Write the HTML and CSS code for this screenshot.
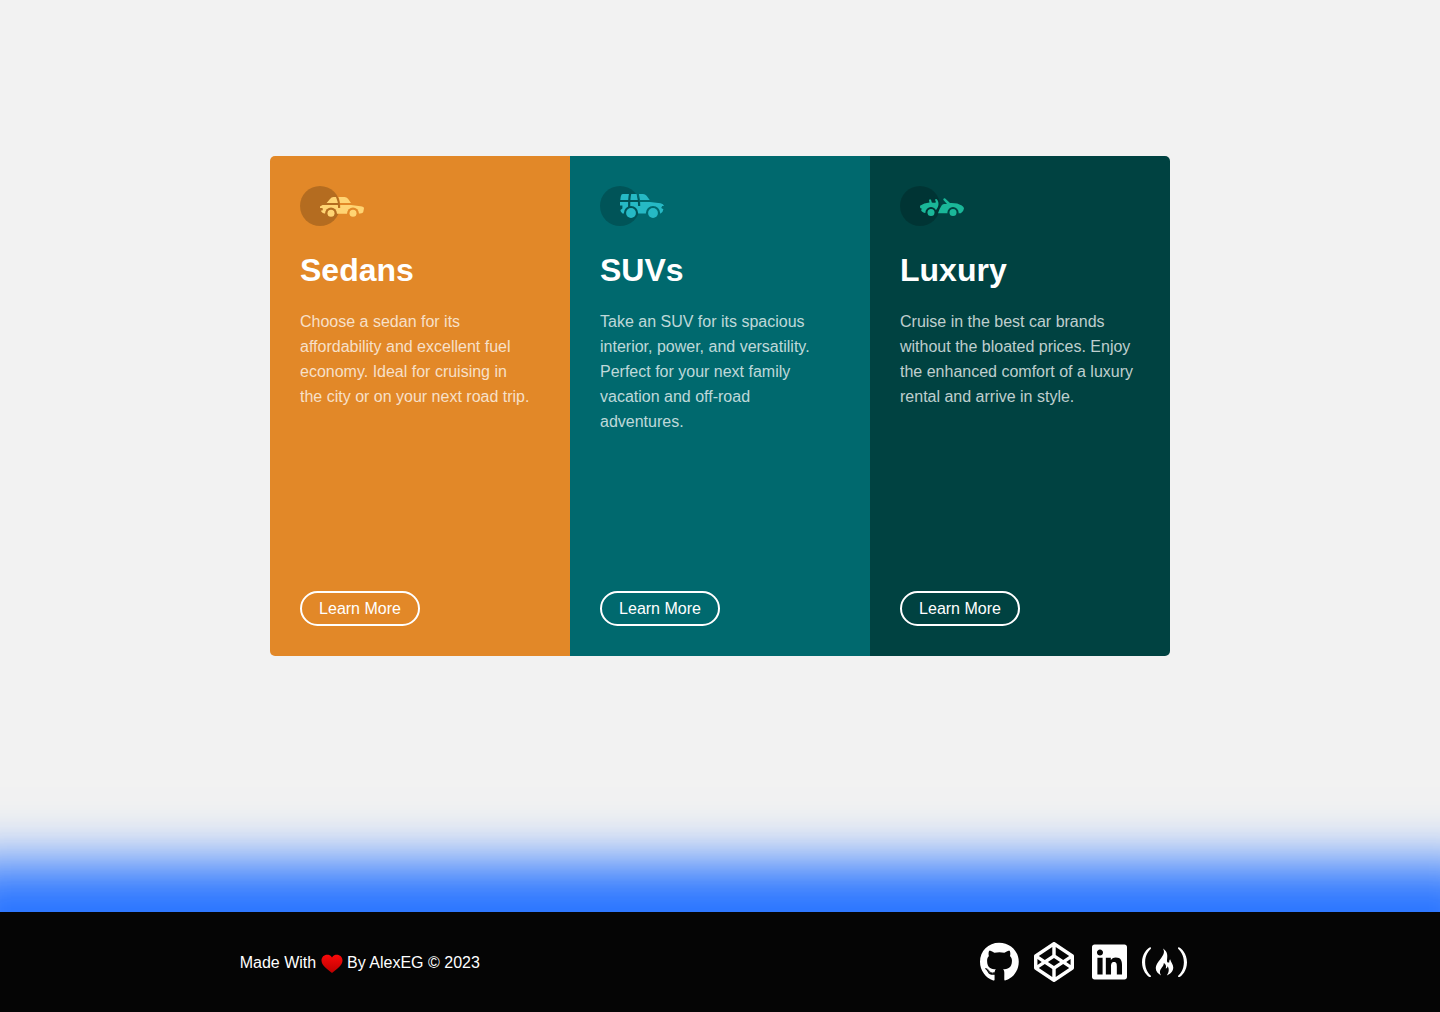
FILE: index.html
```html
<!DOCTYPE html>
<html lang="en">
<head>
<meta charset="utf-8">
<meta name="viewport" content="width=device-width, initial-scale=1">
<title>3-column preview card</title>
<link rel="stylesheet" href="styles.css">
</head>
<body>
<main class="main">
  <div class="cards">
    <section class="card card-sedans">
      <svg class="card-icon" viewBox="0 0 64 40" aria-hidden="true">
        <mask id="sedan-cut">
          <rect width="64" height="40" fill="#fff"/>
          <circle cx="31" cy="27.3" r="5.9" fill="#000"/>
          <circle cx="53" cy="27.3" r="5.9" fill="#000"/>
          <path d="M36.8 10C38.6 13.5 39.3 17 39.2 22" fill="none" stroke="#000" stroke-width="2.2"/>
        </mask>
        <circle cx="20" cy="20" r="20" fill="#000" opacity=".2"/>
        <g fill="#ffd473">
          <g mask="url(#sedan-cut)">
            <path d="M26.6 17L30 12.9Q31.3 11 33.5 11H44.5Q46.6 11 48 12.8L51 17Z"/>
            <path d="M22.5 19H51L60.5 20.2Q64 20.8 64 22.2L63.2 26.2Q62.6 27.3 58 27.7H25.5Q21 26.8 21 24.5H22.4Q23.4 23.2 22.4 22H20V20.6Z"/>
          </g>
          <circle cx="31" cy="27.3" r="3.5"/>
          <circle cx="53" cy="27.3" r="3.5"/>
        </g>
      </svg>
      <h2 class="card-title">Sedans</h2>
      <p class="card-text">Choose a sedan for its affordability and excellent fuel economy. Ideal for cruising in the&nbsp;city or on your next road trip.</p>
      <button class="card-button" type="button">Learn More</button>
    </section>
    <section class="card card-suvs">
      <svg class="card-icon" viewBox="0 0 64 40" aria-hidden="true">
        <mask id="suv-cut">
          <rect width="64" height="40" fill="#fff"/>
          <circle cx="31" cy="27" r="7.1" fill="#000"/>
          <circle cx="53" cy="27" r="7.1" fill="#000"/>
          <path d="M30.3 7Q29 12 29.2 21M37.5 7C38.8 12 39.4 14 39.2 20" fill="none" stroke="#000" stroke-width="2.2"/>
        </mask>
        <circle cx="20" cy="20" r="20" fill="#000" opacity=".2"/>
        <g fill="#26b9c5">
          <g mask="url(#suv-cut)">
            <path d="M22.8 8H43Q45.2 8 46.6 9.8L49.7 14H20.3Q20.6 10 21.4 8.8Q22 8 22.8 8Z"/>
            <path d="M20 16H50L60.5 17.2Q63.6 17.7 64 20H62.2L61.2 22L63.4 23.2Q63 26.4 60.5 27.4H22.5Q20.4 26 20.4 24L22.4 22.5V19.5H20Z"/>
          </g>
          <circle cx="31" cy="27" r="4.9"/>
          <circle cx="53" cy="27" r="4.9"/>
        </g>
      </svg>
      <h2 class="card-title">SUVs</h2>
      <p class="card-text">Take an SUV for its spacious interior, power, and versatility. Perfect for your next family vacation and off-road adventures.</p>
      <button class="card-button" type="button">Learn More</button>
    </section>
    <section class="card card-luxury">
      <svg class="card-icon" viewBox="0 0 64 40" aria-hidden="true">
        <mask id="luxury-cut">
          <rect width="64" height="40" fill="#fff"/>
          <circle cx="31" cy="26.6" r="5.6" fill="#000"/>
          <circle cx="53" cy="26.6" r="5.6" fill="#000"/>
        </mask>
        <circle cx="20" cy="20" r="20" fill="#000" opacity=".2"/>
        <g fill="#1ab799">
          <g mask="url(#luxury-cut)">
            <path d="M20 19.8Q24 17.2 29.5 16.6L29 14Q30 12.8 31 13.8L31.8 16.4Q34 17.2 36 16.2L35 13.7Q36.2 12.4 37.4 14C39 16.6 39 20 36.4 23.6L34 27H25Q21.6 26.4 21 23.8L22.2 23L20.2 22Z"/>
            <path d="M38 27.2Q39.4 23 41.6 19.6Q42.4 18.4 44 18H47L43.2 13.7Q43.6 12 45.2 12.4L50 17Q57 16.6 61.8 19.4Q64 20.8 64 22.4Q63.6 25.6 60.8 27.2Z"/>
          </g>
          <circle cx="31" cy="26.6" r="3.5"/>
          <circle cx="53" cy="26.6" r="3.5"/>
        </g>
      </svg>
      <h2 class="card-title">Luxury</h2>
      <p class="card-text">Cruise in the best car brands without the bloated prices. Enjoy the enhanced comfort of a luxury rental and arrive in style.</p>
      <button class="card-button" type="button">Learn More</button>
    </section>
  </div>
</main>
<footer class="footer">
  <p class="credit">Made With
    <svg class="heart" viewBox="0 0 22 20" role="img" aria-label="love">
      <defs><linearGradient id="heart-fill" x1="0" y1="0" x2="0" y2="1"><stop offset="0" stop-color="#fa0a0a"/><stop offset="1" stop-color="#bd0000"/></linearGradient></defs>
      <path d="M11 3.400C9.600 1.200 7.800.7 6.200.7C3 .7.5 3 .5 6.500C.5 11.500 6 14.800 11 19C16 14.800 21.500 11.500 21.500 6.500C21.500 3 19 .7 15.800.7C14.200.7 12.400 1.200 11 3.400Z" fill="url(#heart-fill)"/>
    </svg>
    By AlexEG © 2023</p>
  <nav class="social">
    <a class="social-link" href="#" aria-label="GitHub"><svg class="social-icon" viewBox="0 0 496 512"><path d="M165.900 397.400c0 2-2.300 3.600-5.200 3.600-3.300.3-5.600-1.300-5.600-3.600 0-2 2.300-3.600 5.200-3.600 3-.3 5.600 1.300 5.600 3.600zm-31.100-4.500c-.7 2 1.300 4.300 4.300 4.900 2.600 1 5.600 0 6.200-2s-1.300-4.300-4.300-5.200c-2.600-.7-5.500.3-6.200 2.300zm44.200-1.700c-2.900.7-4.900 2.600-4.600 4.900.3 2 2.900 3.300 5.900 2.600 2.900-.7 4.900-2.600 4.600-4.600-.3-1.900-3-3.200-5.900-2.900zM244.800 8C106.100 8 0 113.300 0 252c0 110.900 69.800 205.800 169.500 239.200 12.800 2.300 17.300-5.600 17.300-12.100 0-6.200-.3-40.400-.3-61.400 0 0-70 15-84.700-29.800 0 0-11.400-29.100-27.800-36.600 0 0-22.900-15.700 1.600-15.400 0 0 24.900 2 38.600 25.800 21.900 38.600 58.600 27.500 72.900 20.900 2.300-16 8.800-27.100 16-33.700-55.900-6.200-112.300-14.300-112.300-110.500 0-27.500 7.600-41.300 23.600-58.900-2.600-6.500-11.100-33.300 2.600-67.900 20.900-6.500 69 27 69 27 20-5.600 41.500-8.500 62.800-8.500s42.800 2.900 62.800 8.500c0 0 48.100-33.600 69-27 13.700 34.700 5.200 61.400 2.600 67.900 16 17.700 25.800 31.500 25.800 58.900 0 96.500-58.900 104.200-114.800 110.500 9.200 7.900 17 22.900 17 46.400 0 33.700-.3 75.400-.3 83.600 0 6.500 4.600 14.400 17.300 12.100C428.200 457.800 496 362.900 496 252 496 113.300 383.500 8 244.800 8zM97.200 352.900c-1.300 1-1 3.300.7 5.200 1.600 1.600 3.900 2.300 5.200 1 1.300-1 1-3.300-.7-5.200-1.600-1.600-3.900-2.300-5.200-1zm-10.800-8.100c-.7 1.300.3 2.900 2.300 3.900 1.600 1 3.600.7 4.300-.7.7-1.300-.3-2.900-2.300-3.900-2-.6-3.600-.3-4.300.7zm32.400 35.600c-1.600 1.300-1 4.300 1.300 6.200 2.300 2.300 5.200 2.600 6.500 1 1.300-1.300.7-4.300-1.300-6.200-2.200-2.300-5.200-2.600-6.500-1zm-11.400-14.700c-1.600 1-1.600 3.600 0 5.900 1.600 2.300 4.300 3.300 5.600 2.300 1.600-1.300 1.600-3.900 0-6.200-1.400-2.300-4-3.300-5.600-2z"/></svg></a>
    <a class="social-link" href="#" aria-label="CodePen"><svg class="social-icon" viewBox="0 0 512 512"><path d="M502.285 159.704l-234-156c-7.987-4.915-16.511-4.960-24.571 0l-234 156C3.714 163.703 0 170.847 0 177.989v155.999c0 7.143 3.714 14.286 9.715 18.286l234 156.022c7.987 4.915 16.511 4.960 24.571 0l234-156.022c6-3.999 9.715-11.143 9.715-18.286V177.989c-.001-7.142-3.715-14.286-9.716-18.285zM278 63.131l172.286 114.858-76.857 51.429L278 165.703V63.131zm-44 0v102.572l-95.429 63.715-76.857-51.429L234 63.131zM44 219.132l55.143 36.857L44 292.847v-73.715zm190 229.715L61.714 333.989l76.857-51.429L234 346.275v102.572zm22-140.858l-77.715-52 77.715-52 77.715 52-77.715 52zm22 140.858V346.275l95.429-63.715 76.857 51.429L278 448.847zm190-156l-55.143-36.857L468 219.132v73.715z"/></svg></a>
    <a class="social-link" href="#" aria-label="LinkedIn"><svg class="social-icon" viewBox="0 0 448 512"><path d="M416 32H31.900C14.300 32 0 46.500 0 64.300v383.400C0 465.500 14.300 480 31.900 480H416c17.600 0 32-14.500 32-32.300V64.300c0-17.800-14.400-32.300-32-32.300zM135.400 416H69V202.200h66.500V416zm-33.200-243c-21.300 0-38.500-17.300-38.500-38.500S80.900 96 102.200 96c21.200 0 38.500 17.300 38.500 38.500 0 21.300-17.200 38.500-38.500 38.500zm282.100 243h-66.400V312c0-24.800-.5-56.700-34.500-56.700-34.600 0-39.900 27-39.900 54.900V416h-66.400V202.200h63.700v29.200h.9c8.900-16.800 30.600-34.500 62.900-34.500 67.200 0 79.700 44.300 79.700 101.900V416z"/></svg></a>
    <a class="social-link" href="#" aria-label="freeCodeCamp"><svg class="social-icon" viewBox="0 0 576 512"><path d="M98 70C72 84 0 148 0 260C0 368 66 436 96 448C112 452 122 440 110 428C86 404 40 352 40 258C40 164 88 112 111 90C123 76 112 64 98 70ZM478 70C504 84 576 148 576 260C576 368 510 436 480 448C464 452 454 440 466 428C490 404 536 352 536 258C536 164 488 112 465 90C453 76 464 64 478 70Z"/><path d="M268 82C300 130 268 174 234 220C202 262 176 294 176 334C176 378 208 410 244 428C222 394 226 364 246 338C264 314 278 302 280 270C304 286 314 310 304 338C320 338 326 326 326 310C348 338 350 378 318 428C366 408 400 374 400 326C400 280 368 258 360 220C350 230 346 244 350 260C330 270 316 256 320 230C328 170 330 120 268 82Z"/></svg></a>
  </nav>
</footer>
</body>
</html>
```

FILE: styles.css
```css
* {
  box-sizing: border-box;
  margin: 0;
  padding: 0;
}

body {
  display: flex;
  flex-direction: column;
  min-height: 100vh;
  background: #f2f2f2;
  font-family: "Liberation Sans", Arial, sans-serif;
  font-size: 16px;
}

.main {
  display: flex;
  flex: 1;
  align-items: center;
  justify-content: center;
  padding: 50px 20px 150px;
}

.cards {
  display: grid;
  grid-template-columns: repeat(3, 1fr);
  width: 100%;
  max-width: 900px;
  min-height: 500px;
  overflow: hidden;
  border-radius: 5px;
}

.card {
  display: flex;
  flex-direction: column;
  align-items: flex-start;
  padding: 30px;
  color: #fff;
}

.card-sedans { background: #e28828; }
.card-suvs { background: #00696e; }
.card-luxury { background: #004241; }

.card-icon {
  width: 64px;
  height: 40px;
}

.card-title {
  margin: 25px 0 20px;
  font-size: 32px;
  line-height: 38px;
}

.card-text {
  padding-right: 4px;
  color: rgba(255, 255, 255, 0.75);
  line-height: 25px;
}

.card-button {
  width: 120px;
  height: 35px;
  margin-top: auto;
  border: 2px solid #fff;
  border-radius: 18px;
  background: transparent;
  color: #fff;
  font: inherit;
  cursor: pointer;
}

.footer {
  display: flex;
  align-items: center;
  justify-content: space-around;
  min-height: 100px;
  background: #050505;
  box-shadow: 0 0 50px 50px #2a75ff;
  color: #fff;
}

.credit {
  padding-top: 3px;
}

.heart {
  width: 22px;
  height: 20px;
  vertical-align: -6px;
}

.social {
  display: flex;
  gap: 15px;
  padding: 0 16px 0 20px;
}

.social-link {
  display: flex;
  justify-content: center;
  width: 40px;
  color: #fff;
}

.social-icon {
  flex: none;
  height: 40px;
  fill: currentColor;
}
```
